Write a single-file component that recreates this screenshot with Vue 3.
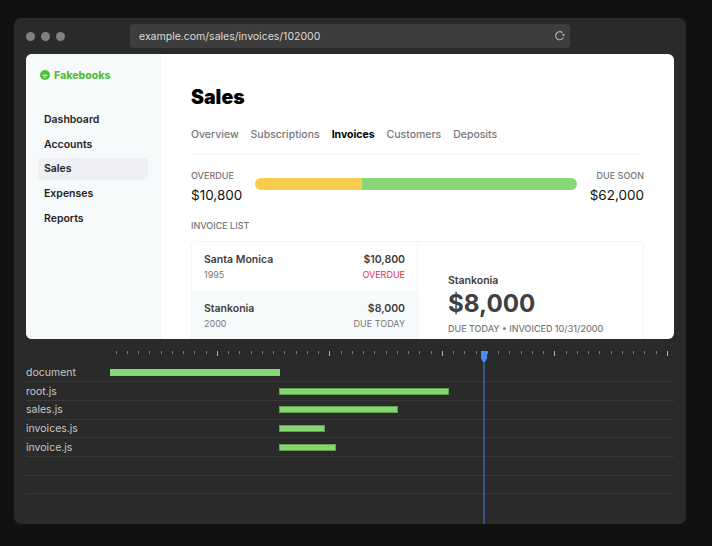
<script setup>
const tabs = [
  { name: 'Overview' },
  { name: 'Subscriptions' },
  { name: 'Invoices', active: true },
  { name: 'Customers' },
  { name: 'Deposits' },
]
const nav = ['Dashboard', 'Accounts', 'Sales', 'Expenses', 'Reports']
const ticks = Array.from({ length: 50 }, (_, i) => i)
const rows = [
  { name: 'document', start: 0, width: 170 },
  { name: 'root.js', start: 169, width: 170, edge: true },
  { name: 'sales.js', start: 169, width: 119, edge: true },
  { name: 'invoices.js', start: 169, width: 46, edge: true },
  { name: 'invoice.js', start: 169, width: 57, edge: true },
  { name: '' },
  { name: '' },
]
</script>

<template>
  <div class="page">
    <div class="window">
      <div class="toolbar">
        <div class="dots"><i></i><i></i><i></i></div>
        <div class="url">
          <span>example.com/sales/invoices/102000</span>
          <svg width="12" height="12" viewBox="0 0 12 12" fill="none">
            <path d="M9.3 7.4A4 4 0 1 1 8.4 2.8" stroke="#b4b4b4" stroke-width="1.2" />
            <path d="M7.8 4.2L11.4 4.2L9.5 6.6Z" fill="#b4b4b4" />
          </svg>
        </div>
      </div>

      <div class="app">
        <aside class="sidebar">
          <div class="brand">
            <svg width="10" height="10" viewBox="0 0 10 10">
              <circle cx="5" cy="5" r="5" fill="#52bf3c" />
              <path d="M2.6 5.2H7.4" stroke="#fff" stroke-width="1.1" />
              <path d="M3.4 7.3H6.2" stroke="#fff" stroke-width="0.7" />
            </svg>
            <span>Fakebooks</span>
          </div>
          <nav class="nav">
            <a v-for="item in nav" :key="item" :class="{ on: item === 'Sales' }">{{ item }}</a>
          </nav>
        </aside>

        <main class="main">
          <h1>Sales</h1>
          <div class="tabs">
            <span v-for="t in tabs" :key="t.name" :class="{ active: t.active }">{{ t.name }}</span>
          </div>

          <div class="stats">
            <div class="stat">
              <div class="cap">OVERDUE</div>
              <div class="amt">$10,800</div>
            </div>
            <div class="meter"><div class="meter-y"></div><div class="meter-g"></div></div>
            <div class="stat right">
              <div class="cap">DUE SOON</div>
              <div class="amt">$62,000</div>
            </div>
          </div>

          <div class="cap list-cap">INVOICE LIST</div>
          <div class="card">
            <div class="list">
              <div class="row">
                <div class="line strong"><span>Santa Monica</span><span>$10,800</span></div>
                <div class="line sub"><span>1995</span><span class="red">OVERDUE</span></div>
              </div>
              <div class="row sel">
                <div class="line strong"><span>Stankonia</span><span>$8,000</span></div>
                <div class="line sub"><span>2000</span><span>DUE TODAY</span></div>
              </div>
            </div>
            <div class="detail">
              <div class="d-name">Stankonia</div>
              <div class="d-amt">$8,000</div>
              <div class="d-meta">DUE TODAY • INVOICED 10/31/2000</div>
            </div>
          </div>
        </main>
      </div>

      <div class="timeline">
        <div class="ruler">
          <i v-for="t in ticks" :key="t" :class="{ tall: (t + 1) % 10 === 0 }"></i>
        </div>
        <div class="rows">
          <div v-for="(r, i) in rows" :key="i" class="tl-row">
            <span class="tl-name">{{ r.name }}</span>
            <div class="track">
              <div
                v-if="r.width"
                class="bar"
                :class="{ edge: r.edge }"
                :style="{ marginLeft: r.start + 'px', width: r.width + 'px' }"
              ></div>
            </div>
          </div>
        </div>
        <div class="cursor">
          <div class="cursor-head"></div>
          <div class="cursor-line"></div>
        </div>
      </div>
    </div>
  </div>
</template>

<style>
html, body { margin: 0; background: #111111; }
</style>

<style scoped>
.page {
  width: 712px;
  height: 546px;
  box-sizing: border-box;
  padding: 18px 26px 22px 14px;
  background: #111111;
  font-family: Inter, "Noto Sans", sans-serif;
  overflow: hidden;
}
.window {
  width: 672px;
  height: 506px;
  background: #2a2a2a;
  border-radius: 7px;
  display: flex;
  flex-direction: column;
  padding: 0 12px;
  box-sizing: border-box;
  position: relative;
}
.toolbar {
  height: 36px;
  display: flex;
  align-items: flex-start;
  flex: none;
}
.dots {
  display: flex;
  gap: 6px;
  width: 104px;
  padding-top: 13.5px;
  flex: none;
}
.dots i {
  width: 9px;
  height: 9px;
  border-radius: 50%;
  background: #808080;
}
.url {
  margin-top: 6px;
  width: 440px;
  height: 24px;
  box-sizing: border-box;
  background: #3d3d3d;
  border-radius: 4px;
  display: flex;
  align-items: center;
  justify-content: space-between;
  padding: 0 4px 0 9px;
  color: #dcdcdc;
  font-size: 10.5px;
}
.app {
  height: 285px;
  flex: none;
  display: flex;
  background: #fff;
  border-radius: 6px;
  overflow: hidden;
}
.sidebar {
  width: 135px;
  flex: none;
  box-sizing: border-box;
  background: #f7fafb;
  border-right: 1px solid #f2f4f6;
  padding: 15px 12px;
}
.brand {
  display: flex;
  align-items: center;
  gap: 4px;
  padding-left: 2px;
  height: 12px;
  color: #52bf3c;
  font-size: 10.5px;
  font-weight: 800;
}
.nav {
  margin-top: 28px;
  display: flex;
  flex-direction: column;
  gap: 2.7px;
}
.nav a {
  height: 22px;
  line-height: 22px;
  padding-left: 6px;
  border-radius: 4px;
  color: #1f1f1f;
  font-size: 10.5px;
  font-weight: 600;
}
.nav a.on { background: #eef0f5; }
.main {
  flex: 1;
  min-width: 0;
  padding: 0 30px;
  overflow: hidden;
}
h1 {
  margin: 31px 0 0;
  font-size: 19.5px;
  line-height: 24px;
  font-weight: 900;
  color: #000;
}
.tabs {
  margin-top: 19px;
  height: 26px;
  display: flex;
  gap: 12px;
  border-bottom: 1px solid #f6f6f7;
  font-size: 10.5px;
  line-height: 14px;
  font-weight: 500;
  color: #777;
}
.tabs span { letter-spacing: -0.01px; }
.tabs .active { color: #000; font-weight: 700; }
.stats {
  margin-top: 15px;
  display: flex;
  align-items: flex-start;
  gap: 13px;
}
.stat { flex: none; }
.stat.right { text-align: right; }
.cap {
  font-size: 9px;
  line-height: 12px;
  color: #757575;
  font-weight: 500;
}
.amt {
  margin-top: 4px;
  font-size: 13.5px;
  line-height: 18px;
  color: #111;
}
.meter {
  flex: 1;
  height: 12px;
  margin-top: 8px;
  display: flex;
  border-radius: 6px;
  overflow: hidden;
}
.meter-y { width: 107px; background: #f8cd4b; }
.meter-g { flex: 1; background: #88d87a; }
.list-cap { margin-top: 16px; }
.card {
  margin-top: 9px;
  display: flex;
  height: 140px;
  border: 1px solid #f4f4f5;
  border-radius: 5px;
  box-sizing: border-box;
}
.list {
  width: 226px;
  flex: none;
  border-right: 1px solid #f4f4f5;
  box-sizing: border-box;
}
.row {
  padding: 11px 12px 0;
  height: 49px;
  box-sizing: border-box;
}
.row.sel { background: #f7fafb; }
.line {
  display: flex;
  justify-content: space-between;
}
.strong {
  font-size: 10.5px;
  line-height: 14px;
  font-weight: 600;
  color: #404040;
}
.sub {
  margin-top: 2px;
  font-size: 9px;
  line-height: 12px;
  color: #777;
}
.red { color: #e0324a; }
.detail {
  padding: 32px 30px 0;
  color: #404040;
}
.d-name { font-size: 10.5px; line-height: 14px; font-weight: 600; }
.d-amt { margin-top: 0; font-size: 24.2px; line-height: 32px; font-weight: 700; }
.d-meta { margin-top: 3px; font-size: 9px; line-height: 12px; color: #777; font-weight: 500; white-space: nowrap; }

.timeline {
  flex: 1;
  min-height: 0;
}
.ruler {
  margin: 12px 0 0 89.7px;
  width: 552.5px;
  height: 7px;
  display: flex;
  justify-content: space-between;
  align-items: flex-start;
}
.ruler i {
  width: 1px;
  height: 3px;
  background: #7d7d7d;
}
.ruler i.tall { height: 5px; background: #b5b5b5; }
.rows { margin-top: 5.8px; }
.tl-row {
  height: 18.67px;
  box-sizing: border-box;
  border-bottom: 1px solid #383838;
  display: flex;
  align-items: center;
  font-size: 10.5px;
  color: #c8c8c8;
}
.tl-name { width: 84px; flex: none; }
.track { flex: 1; min-width: 0; }
.bar { height: 7px; background: #84d672; box-sizing: border-box; }
.bar.edge { border: 1px solid #5f9f52; }
.cursor {
  position: absolute;
  left: 466.5px;
  top: 333px;
  bottom: 0;
  width: 7px;
  display: flex;
  flex-direction: column;
  align-items: center;
}
.cursor-head {
  width: 6px;
  height: 11px;
  background: #4b8cf0;
  clip-path: polygon(0 0, 100% 0, 100% 70%, 65% 100%, 35% 100%, 0 70%);
  flex: none;
}
.cursor-line {
  flex: 1;
  width: 2px;
  background: #34558a;
}
</style>
